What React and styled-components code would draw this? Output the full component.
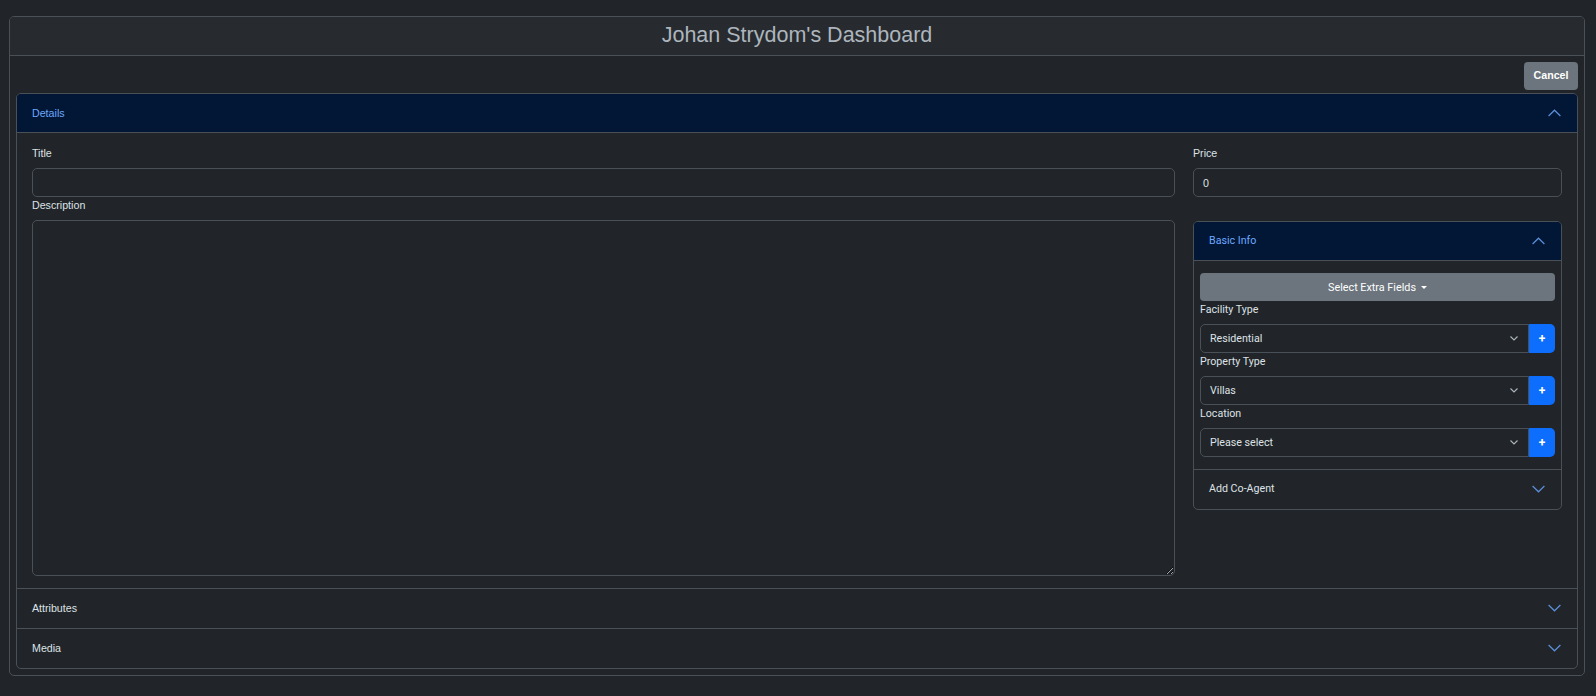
import React from "react";
import styled, { createGlobalStyle, css } from "styled-components";

const GlobalStyle = createGlobalStyle`
  html, body { margin: 0; background: #212529; }
  body {
    font-family: "Liberation Sans", Arial, sans-serif;
    color: #dee2e6;
    font-size: 10.67px;
  }
  *, *::before, *::after { box-sizing: border-box; }
`;

const Page = styled.div`
  padding: 16px 11px 0 9px;
`;

const Card = styled.div`
  border: 1px solid #495057;
  border-radius: 5px;
  background: #212529;
`;

const CardHeader = styled.div`
  height: 39px;
  border-bottom: 1px solid #495057;
  background: #272b2f;
  border-radius: 4px 4px 0 0;
  display: flex;
  align-items: center;
  justify-content: center;
`;

const PageTitle = styled.h2`
  margin: 0;
  font-weight: 400;
  font-size: 21.5px;
  line-height: 1.2;
  color: #adb5bd;
`;

const CardBody = styled.div`
  padding: 6px;
`;

const Toolbar = styled.div`
  display: flex;
  justify-content: flex-end;
  margin-bottom: 3px;
`;

const CancelButton = styled.button`
  width: 54px;
  height: 28px;
  border: none;
  border-radius: 4px;
  background: #6c757d;
  color: #fff;
  font-family: "Liberation Sans", Arial, sans-serif;
  font-weight: 700;
  font-size: 10.67px;
  padding: 0 0 3px;
`;

const Accordion = styled.div`
  border: 1px solid #495057;
  border-radius: 5px;
  overflow: hidden;
  ${(p) =>
    p.$roboto &&
    css`
      font-family: Roboto, "Liberation Sans", sans-serif;
    `}
`;

const AccItem = styled.div`
  & + & {
    border-top: 1px solid #495057;
  }
`;

const AccButton = styled.button`
  width: 100%;
  height: 39px;
  display: flex;
  align-items: center;
  justify-content: space-between;
  padding: 0 16px 2px 15px;
  border: none;
  font-family: inherit;
  font-size: 10.67px;
  text-align: left;
  background: ${(p) => (p.$active ? "#021735" : "transparent")};
  color: ${(p) => (p.$active ? "#6ea8fe" : "#dee2e6")};
  box-shadow: ${(p) => (p.$active ? "inset 0 -1px 0 #495057" : "none")};
`;

const AccBody = styled.div`
  padding: ${(p) => (p.$tight ? "12px 6px" : "12px 15px")};
`;

const Grid = styled.div`
  display: grid;
  grid-template-columns: calc(75% - 4.5px) calc(25% - 13.5px);
  column-gap: 18px;
  align-items: start;
`;

const Col = styled.div`
  display: flex;
  flex-direction: column;
`;

const Label = styled.label`
  display: block;
  line-height: 16px;
  margin-bottom: 7px;
  font-size: 10.67px;
  color: #dee2e6;
  ${(p) =>
    p.$sub &&
    css`
      padding-top: 1px;
      margin-bottom: 6px;
    `}
`;

const TextInput = styled.input`
  height: 29px;
  width: 100%;
  border: 1px solid #495057;
  border-radius: 5px;
  background: #212529;
  color: #dee2e6;
  padding: 0 9px;
  font-family: inherit;
  font-size: 10.67px;
  outline: none;
`;

const TextArea = styled.textarea`
  display: block;
  width: 100%;
  height: 356px;
  border: 1px solid #495057;
  border-radius: 5px;
  background: #212529;
  color: #dee2e6;
  resize: vertical;
  font-family: inherit;
  outline: none;
`;

const SubWrap = styled.div`
  margin-top: 24px;
`;

const ExtraButton = styled.button`
  width: 100%;
  height: 28px;
  border: none;
  border-radius: 4px;
  background: #6c757d;
  color: #fff;
  font-family: Roboto, sans-serif;
  font-size: 10.8px;
  display: flex;
  align-items: center;
  justify-content: center;
  gap: 5px;
  &::after {
    content: "";
    border-top: 3px solid #fff;
    border-left: 3px solid transparent;
    border-right: 3px solid transparent;
  }
`;

const InputGroup = styled.div`
  display: flex;
  height: 29px;
`;

const SelectWrap = styled.div`
  position: relative;
  flex: 1;
`;

const Select = styled.select`
  appearance: none;
  width: 100%;
  height: 100%;
  border: 1px solid #495057;
  border-radius: 5px 0 0 5px;
  background: #212529;
  color: #dee2e6;
  padding: 0 30px 0 9px;
  font-family: Roboto, sans-serif;
  font-size: 10.67px;
  outline: none;
`;

const SelectArrow = styled.svg`
  position: absolute;
  right: 11px;
  top: 12px;
  pointer-events: none;
`;

const AddButton = styled.button`
  width: 26px;
  border: none;
  border-radius: 0 5px 5px 0;
  background: #0d6efd;
  color: #fff;
  font-family: Roboto, sans-serif;
  font-size: 12px;
  font-weight: 700;
  padding: 0;
`;

const Chevron = ({ up }) => (
  <svg width="13" height="8" viewBox="0 0 13 8">
    <polyline
      points={up ? "0.6,7 6.5,1.2 12.4,7" : "0.6,1 6.5,6.8 12.4,1"}
      fill="none"
      stroke="#5b8fd9"
      strokeWidth="1.2"
    />
  </svg>
);

const SelectField = ({ label, value, options }) => (
  <>
    <Label $sub>{label}</Label>
    <InputGroup>
      <SelectWrap>
        <Select defaultValue={value}>
          {options.map((o) => (
            <option key={o}>{o}</option>
          ))}
        </Select>
        <SelectArrow width="8" height="5" viewBox="0 0 8 5">
          <polyline points="0.5,0.5 4,4 7.5,0.5" fill="none" stroke="#adb5bd" strokeWidth="1.1" />
        </SelectArrow>
      </SelectWrap>
      <AddButton>+</AddButton>
    </InputGroup>
  </>
);

export default function App() {
  return (
    <>
      <GlobalStyle />
      <Page>
        <Card>
          <CardHeader>
            <PageTitle>Johan Strydom's Dashboard</PageTitle>
          </CardHeader>
          <CardBody>
            <Toolbar>
              <CancelButton>Cancel</CancelButton>
            </Toolbar>
            <Accordion>
              <AccItem>
                <AccButton $active>
                  Details
                  <Chevron up />
                </AccButton>
                <AccBody>
                  <Grid>
                    <Col>
                      <Label>Title</Label>
                      <TextInput defaultValue="" />
                      <Label>Description</Label>
                      <TextArea />
                    </Col>
                    <Col>
                      <Label>Price</Label>
                      <TextInput defaultValue="0" />
                      <SubWrap>
                        <Accordion $roboto>
                          <AccItem>
                            <AccButton $active>
                              Basic Info
                              <Chevron up />
                            </AccButton>
                            <AccBody $tight>
                              <ExtraButton>Select Extra Fields</ExtraButton>
                              <SelectField
                                label="Facility Type"
                                value="Residential"
                                options={["Residential", "Commercial"]}
                              />
                              <SelectField
                                label="Property Type"
                                value="Villas"
                                options={["Villas", "Apartments"]}
                              />
                              <SelectField
                                label="Location"
                                value="Please select"
                                options={["Please select"]}
                              />
                            </AccBody>
                          </AccItem>
                          <AccItem>
                            <AccButton>
                              Add Co-Agent
                              <Chevron />
                            </AccButton>
                          </AccItem>
                        </Accordion>
                      </SubWrap>
                    </Col>
                  </Grid>
                </AccBody>
              </AccItem>
              <AccItem>
                <AccButton>
                  Attributes
                  <Chevron />
                </AccButton>
              </AccItem>
              <AccItem>
                <AccButton>
                  Media
                  <Chevron />
                </AccButton>
              </AccItem>
            </Accordion>
          </CardBody>
        </Card>
      </Page>
    </>
  );
}
